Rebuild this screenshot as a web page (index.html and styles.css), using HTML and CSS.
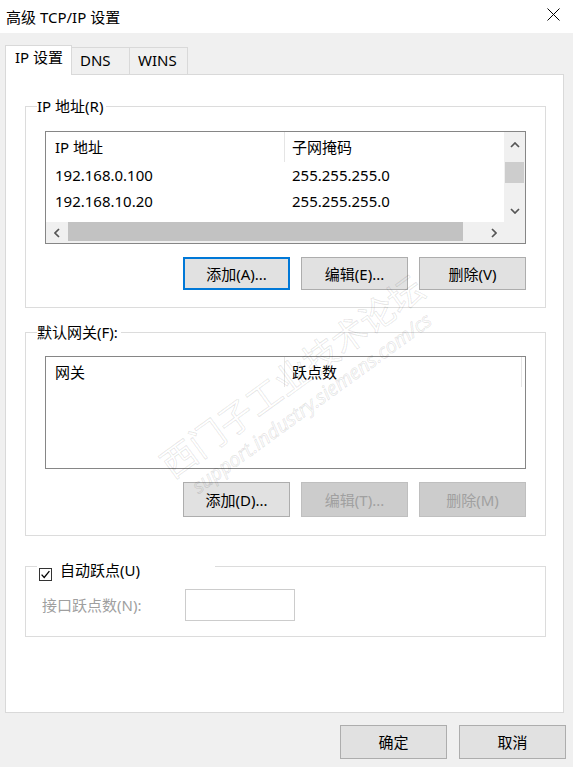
FILE: index.html
```html
<!DOCTYPE html>
<html lang="zh-CN">
<head>
<meta charset="utf-8">
<title>高级 TCP/IP 设置</title>
<link rel="stylesheet" href="styles.css">
</head>
<body>
<header class="titlebar">
  <span class="title">高级 TCP/IP 设置</span>
  <svg class="close" width="13" height="13" viewBox="0 0 13 13"><path d="M0.5 0.5 L12.5 12.5 M12.5 0.5 L0.5 12.5" stroke="#000" stroke-width="1" fill="none"/></svg>
</header>
<div class="tabs">
  <div class="tab active">IP 设置</div>
  <div class="tab">DNS</div>
  <div class="tab">WINS</div>
</div>
<div class="panel">
  <section class="group">
    <div class="group-head"><span class="group-label">IP 地址(R)</span></div>
    <div class="group-body body-ip">
      <div class="list">
        <div class="list-view">
          <div class="row head"><span class="c1">IP 地址</span><span class="c2">子网掩码</span></div>
          <div class="row"><span class="c1">192.168.0.100</span><span class="c2">255.255.255.0</span></div>
          <div class="row"><span class="c1">192.168.10.20</span><span class="c2">255.255.255.0</span></div>
        </div>
        <div class="vscroll">
          <div class="arrow arrow-up"><svg width="10" height="6" viewBox="0 0 10 6"><path d="M1 5 L5 1 L9 5" stroke="#555" stroke-width="1.7" fill="none"/></svg></div>
          <div class="vthumb"></div>
          <div class="spacer"></div>
          <div class="arrow arrow-down"><svg width="10" height="6" viewBox="0 0 10 6"><path d="M1 1 L5 5 L9 1" stroke="#555" stroke-width="1.7" fill="none"/></svg></div>
        </div>
        <div class="hscroll">
          <div class="arrow arrow-side"><svg width="6" height="10" viewBox="0 0 6 10"><path d="M5 1 L1 5 L5 9" stroke="#555" stroke-width="1.7" fill="none"/></svg></div>
          <div class="hthumb"></div>
          <div class="spacer"></div>
          <div class="arrow arrow-side"><svg width="6" height="10" viewBox="0 0 6 10"><path d="M1 1 L5 5 L1 9" stroke="#555" stroke-width="1.7" fill="none"/></svg></div>
        </div>
        <div class="corner"></div>
      </div>
      <div class="btn-row">
        <button class="btn default">添加(A)...</button>
        <button class="btn">编辑(E)...</button>
        <button class="btn">删除(V)</button>
      </div>
    </div>
  </section>

  <section class="group group-gw">
    <div class="group-head"><span class="group-label">默认网关(F):</span></div>
    <div class="group-body body-gw">
      <div class="list list-plain">
        <div class="row head"><span class="c1">网关</span><span class="c2 c2-gw">跃点数</span></div>
      </div>
      <div class="btn-row btn-row-gw">
        <button class="btn">添加(D)...</button>
        <button class="btn" disabled>编辑(T)...</button>
        <button class="btn" disabled>删除(M)</button>
      </div>
    </div>
  </section>

  <section class="group group-auto">
    <div class="group-head head-auto">
      <label class="group-label auto-label">
        <svg class="checkbox" width="13" height="13" viewBox="0 0 13 13"><rect x="0.5" y="0.5" width="12" height="12" fill="#fff" stroke="#333" stroke-width="1"/><path d="M2.6 6.6 L5.2 9.4 L10.4 3.2" stroke="#000" stroke-width="1.3" fill="none"/></svg>
        <span>自动跃点(U)</span>
      </label>
    </div>
    <div class="group-body body-auto">
      <div class="metric-row">
        <span class="metric-label">接口跃点数(N):</span>
        <input class="metric-input" type="text" disabled>
      </div>
    </div>
  </section>
</div>
<div class="footer">
  <button class="btn btn-footer">确定</button>
  <button class="btn btn-footer">取消</button>
</div>

<div class="watermark" aria-hidden="true">
  <div class="wm-1">西门子工业技术论坛</div>
  <div class="wm-2">support.industry.siemens.com/cs</div>
</div>
</body>
</html>
```

FILE: styles.css
```css
* { box-sizing: border-box; }
html, body { margin: 0; padding: 0; }
body {
  width: 573px;
  height: 767px;
  background: #f0f0f0;
  font-family: "Noto Sans", "Noto Sans CJK SC", sans-serif;
  font-size: 15px;
  color: #000;
  position: relative;
  overflow: hidden;
}

/* title bar */
.titlebar {
  height: 33px;
  background: #fff;
  display: flex;
  justify-content: space-between;
  align-items: center;
  padding-left: 6px;
}
.title { line-height: 20px; }
.close { align-self: flex-start; margin-top: 8px; margin-right: 13px; }

/* tabs */
.tabs { display: flex; align-items: flex-end; padding: 12px 0 0 5px; }
.tab {
  height: 27px;
  width: 58px;
  padding-left: 8px;
  line-height: 25px;
  border-top: 1px solid #d9d9d9;
  border-right: 1px solid #d9d9d9;
  background: #f0f0f0;
}
.tab.active {
  height: 30px;
  width: 67px;
  margin-bottom: -1px;
  border-left: 1px solid #d9d9d9;
  background: #fff;
  position: relative;
  z-index: 1;
  line-height: 22px;
  padding-left: 9px;
}

/* panel */
.panel {
  margin-left: 5px;
  width: 559px;
  height: 639px;
  background: #fff;
  border: 1px solid #d9d9d9;
  padding: 21px 17px 0 19px;
}

/* group boxes */
.group-head { display: flex; height: 20px; line-height: 20px; }
.group-head::before {
  content: "";
  width: 11px;
  margin-top: 10px;
  border-top: 1px solid #dcdcdc;
  border-left: 1px solid #dcdcdc;
}
.group-head::after {
  content: "";
  flex: 1;
  margin-top: 10px;
  border-top: 1px solid #dcdcdc;
  border-right: 1px solid #dcdcdc;
}
.group-label { padding-right: 3px; white-space: nowrap; }
.group-body { border: 1px solid #dcdcdc; border-top: none; }
.body-ip { padding: 15px 19px 17px 19px; }
.group-gw { margin-top: 14px; }
.body-gw { padding: 14px 19px 18px 19px; }
.group-auto { margin-top: 20px; }
.head-auto { height: 24px; }
.auto-label { width: 178px; display: flex; align-items: flex-start; padding-left: 2px; }
.checkbox { margin-top: 12px; flex: none; }
.auto-label span { margin-left: 8px; padding-top: 4px; line-height: 20px; }
.body-auto { padding: 9px 0 15px 16px; }

/* list views */
.list {
  height: 113px;
  border: 1px solid #868686;
  background: #fff;
  display: grid;
  grid-template-columns: 1fr 21px;
  grid-template-rows: 90px 21px;
}
.list-plain { display: block; }
.list-view { overflow: hidden; }
.row { display: flex; height: 26px; line-height: 26px; white-space: nowrap; }
.row.head { height: 30px; line-height: 30px; }
.c1 { width: 239px; padding-left: 9px; flex: none; }
.c2 { padding-left: 7px; }
.head .c1 { border-right: 1px solid #e5e5e5; }
.c2-gw { width: 237px; border-right: 1px solid #e5e5e5; }

/* scroll bars */
.vscroll { background: #f0f0f0; display: flex; flex-direction: column; }
.hscroll { background: #f0f0f0; display: flex; }
.corner { background: #f0f0f0; }
.arrow { display: flex; align-items: center; justify-content: center; flex: none; }
.arrow svg { display: block; }
.arrow-up { height: 26px; }
.arrow-down { height: 22px; }
.arrow-side { width: 21px; }
.vthumb { height: 21px; margin: 4px 1px 0 1px; background: #cdcdcd; flex: none; }
.hthumb { width: 395px; margin: 0 0 2px 1px; background: #c2c2c2; flex: none; }
.spacer { flex: 1; }

/* buttons */
.btn-row { display: flex; justify-content: flex-end; gap: 11px; margin-top: 13px; }
.btn {
  width: 107px;
  height: 33px;
  border: 1px solid #adadad;
  background: #e1e1e1;
  font: inherit;
  color: #000;
  padding: 0;
  line-height: 20px;
}
.btn.default { border: 2px solid #0078d7; }
.btn:disabled { background: #cccccc; border-color: #bfbfbf; color: #a0a0a0; }
.btn-row-gw .btn { height: 35px; }

/* metric row */
.metric-row { display: flex; align-items: center; }
.metric-label { width: 143px; color: #9f9f9f; line-height: 20px; }
.metric-input {
  width: 110px;
  height: 32px;
  border: 1px solid #cccccc;
  background: #fff;
  margin: 0;
  padding: 0;
}

/* footer */
.footer { display: flex; justify-content: flex-end; gap: 12px; margin-top: 12px; padding-right: 7px; }
.btn-footer { height: 34px; }

/* watermark overlay */
.watermark {
  position: absolute;
  left: 135px;
  top: 352px;
  width: 330px;
  transform: rotate(-36deg);
  pointer-events: none;
  text-align: center;
  color: rgba(0, 0, 0, 0.015);
  -webkit-text-stroke: 1px rgba(0, 0, 0, 0.10);
  white-space: nowrap;
}
.wm-1 { font-family: "Noto Sans CJK SC", sans-serif; font-size: 35px; line-height: 40px; }
.wm-2 { font-family: "Noto Sans", sans-serif; font-size: 20px; line-height: 30px; font-style: italic; }
```
